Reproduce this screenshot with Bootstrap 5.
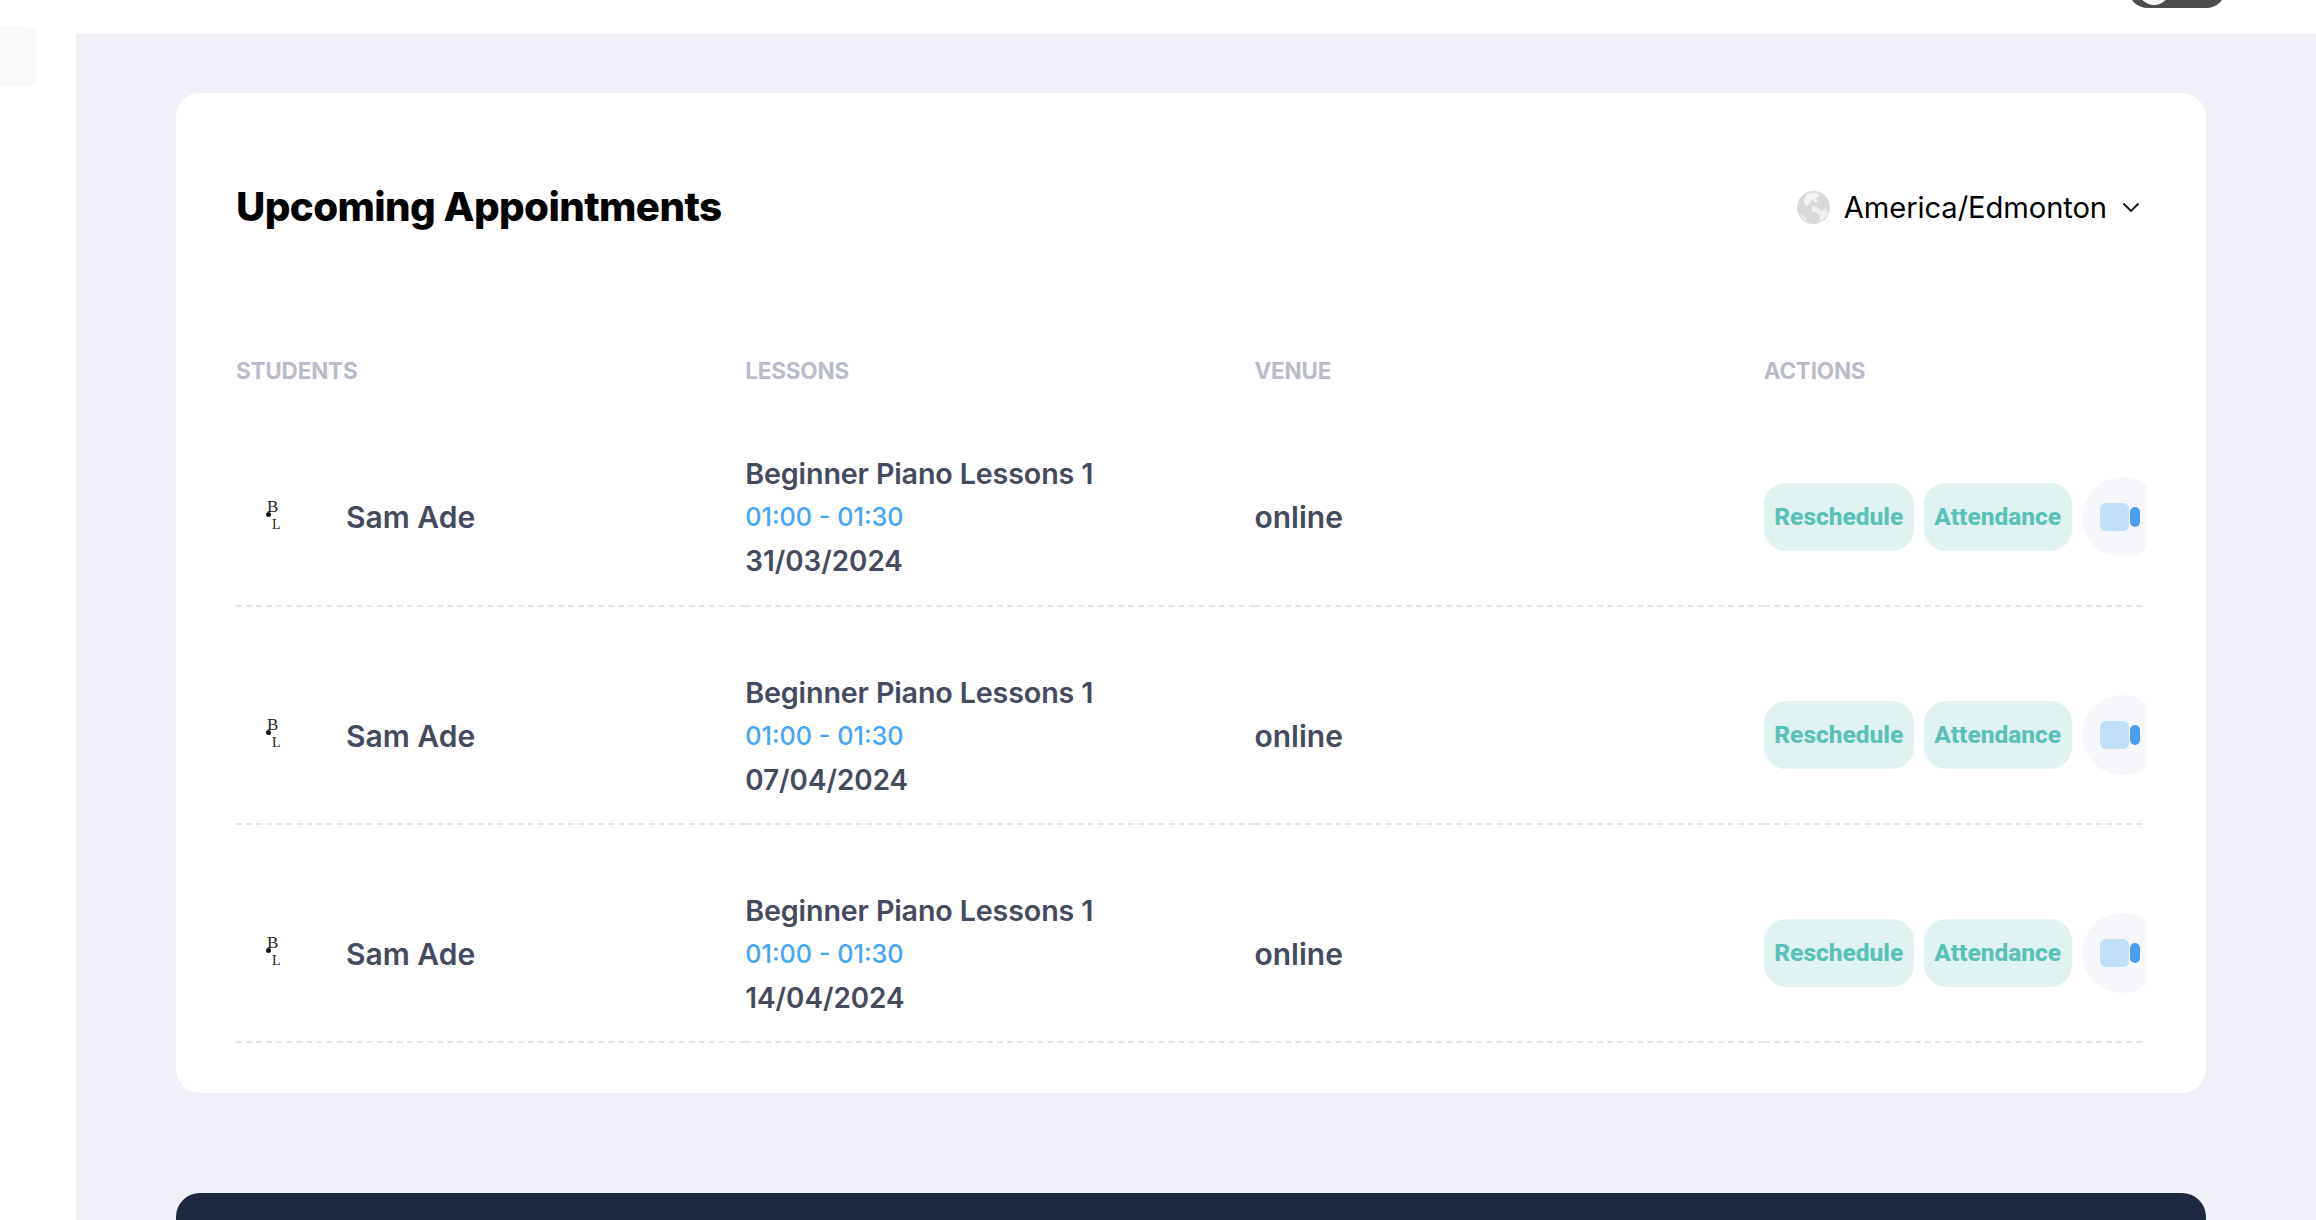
<!DOCTYPE html>
<html lang="en"><head><meta charset="utf-8"><title>Upcoming Appointments</title>
<link href="https://cdn.jsdelivr.net/npm/bootstrap@5.3.0/dist/css/bootstrap.min.css" rel="stylesheet">
<style>
html,body{height:100%;overflow:hidden;background:#fff}
body{font-family:"Inter","Liberation Sans",sans-serif}
.shell{height:1220px}
.side-rail{width:76px;flex:none;padding-top:27px}
.side-tab{width:36px;height:59px;background:#f7f8fa;border-radius:0 8px 8px 0}
.content-col{width:2240px;min-width:0;flex:none}
.top-strip{height:34px;flex:none;overflow:hidden;padding-right:90px}
.mode-toggle{width:98px;height:40px;margin-bottom:26px;background:#4d4d4d;border-radius:20px;padding:0 0 0 10px;overflow:hidden}
.mode-knob{width:32px;height:32px;border-radius:50%;background:#f4f4f4;margin-top:5px}
.main-area{background:#eff0f8;padding:59px 110px 0 100px;overflow:hidden;min-width:0}
.appt-panel{height:1000px;border:0;border-radius:24px;padding:0 60px;background:#fff}
.panel-head{height:263px}
.panel-title{font-size:40.3px;font-weight:800;color:#000;letter-spacing:-.6px;margin:0;line-height:1;padding-top:94px}
.zone{padding-top:98px;margin-right:6px;font-size:29.2px;color:#000;line-height:33px;letter-spacing:-.1px}
.zone-text{margin:0 15px 0 14px}
.table-clip{overflow:hidden;min-width:0}
.appt-table{width:2037px;table-layout:fixed;margin:0;--bs-table-bg:transparent}
.appt-table th{font-size:22.5px;font-weight:700;color:#b9bbca;padding:0 0 2px;border:0;line-height:30px;letter-spacing:-.2px}
.appt-table td{height:218px;padding:42px 0 0;border:0;border-bottom:2px dashed #e4e6ef;vertical-align:middle;color:#454b5e;background:transparent}
.person{font-size:30px;font-weight:600}
.logo-box{width:110px;padding-left:31px;flex:none}
.logo-mark{position:relative;width:22px;margin-top:-6px;font-family:"Liberation Serif",serif;color:#222}
.logo-mark span{display:block;font-size:17px;line-height:20px}
.logo-mark span+span{font-size:14px;line-height:16px;padding-left:5px}
.logo-mark::after{content:"";position:absolute;left:-1px;top:15px;width:5px;height:5px;border-radius:50%;background:#111}
.lesson-name{font-size:28.7px;font-weight:600;line-height:44px;letter-spacing:-.15px}
.lesson-time{font-size:25.2px;font-weight:500;line-height:43px;color:#45a5f8}
.lesson-date{font-size:27.8px;font-weight:600;line-height:44px}
.venue-text{font-size:30px;font-weight:600}
.action-row{margin-top:-2px}
.act{height:68px;border:0;border-radius:22px;background:#e0f3f1;color:#59c2b8;font-family:Roboto,"Liberation Sans",sans-serif;font-weight:800;font-size:24.5px;padding:0;line-height:68px;white-space:nowrap;--bs-btn-hover-bg:#e0f3f1;--bs-btn-hover-color:#59c2b8}
.act-wide{width:150px;flex:none}
.act-mid{width:148px;flex:none;margin:0 10px}
.video-btn{width:80px;height:80px;flex:none;border:0;border-radius:50%;background:#f6f7fa;padding:0}
.video-btn svg{display:block}
.dark-panel{height:120px;margin-top:100px;background:#1e293f;border-radius:24px}
</style></head><body>
<div class="shell d-flex">
  <aside class="side-rail"><div class="side-tab"></div></aside>
  <div class="content-col d-flex flex-column">
    <div class="top-strip d-flex justify-content-end align-items-end"><div class="mode-toggle"><div class="mode-knob"></div></div></div>
    <main class="main-area flex-grow-1">
      <section class="card appt-panel">
        <div class="panel-head d-flex justify-content-between align-items-start">
          <h2 class="panel-title">Upcoming Appointments</h2>
          <div class="zone d-flex align-items-center">
            <svg width="33" height="33" viewBox="0 0 33 33"><circle cx="16.5" cy="16.5" r="16.5" fill="#d9d9d9"/><path d="M10 3c3-1.500 7-2 10-1l3 3-4 2 2 4-3 1-2-3-3 2-2 4-3-1-1-5z" fill="#f2f2f2"/><path d="M15 15l5 1 4 4 5-3 2 6-5 6-4 2 1-6-4-4-4 0z" fill="#efefef"/><path d="M3 22l4 3 3 5c-3-1-6-4-7-8z" fill="#eeeeee"/></svg>
            <span class="zone-text">America/Edmonton</span>
            <svg width="18" height="11" viewBox="0 0 18 11" fill="none" stroke="#111" stroke-width="1.8"><path d="M1.500 1.500L9 9l7.500-7.500"/></svg>
          </div>
        </div>
        <div class="table-clip">
          <table class="table appt-table">
            <thead><tr><th>STUDENTS</th><th>LESSONS</th><th>VENUE</th><th>ACTIONS</th></tr></thead>
            <tbody><tr>
              <td><div class="d-flex align-items-center"><div class="logo-box"><div class="logo-mark"><span>B</span><span>L</span></div></div><span class="person">Sam Ade</span></div></td>
              <td><div class="lesson-name">Beginner Piano Lessons 1</div><div class="lesson-time">01:00 - 01:30</div><div class="lesson-date">31/03/2024</div></td>
              <td class="venue-text">online</td>
              <td><div class="action-row d-flex align-items-center"><button class="btn act act-wide">Reschedule</button><button class="btn act act-mid">Attendance</button><button class="btn video-btn" aria-label="Video"><svg width="80" height="80" viewBox="0 0 80 80"><rect x="18" y="26" width="29" height="28" rx="6" fill="#c1e0f7"/><rect x="48" y="30" width="10" height="20" rx="5" fill="#4a9ef2"/></svg></button></div></td>
            </tr><tr>
              <td><div class="d-flex align-items-center"><div class="logo-box"><div class="logo-mark"><span>B</span><span>L</span></div></div><span class="person">Sam Ade</span></div></td>
              <td><div class="lesson-name">Beginner Piano Lessons 1</div><div class="lesson-time">01:00 - 01:30</div><div class="lesson-date">07/04/2024</div></td>
              <td class="venue-text">online</td>
              <td><div class="action-row d-flex align-items-center"><button class="btn act act-wide">Reschedule</button><button class="btn act act-mid">Attendance</button><button class="btn video-btn" aria-label="Video"><svg width="80" height="80" viewBox="0 0 80 80"><rect x="18" y="26" width="29" height="28" rx="6" fill="#c1e0f7"/><rect x="48" y="30" width="10" height="20" rx="5" fill="#4a9ef2"/></svg></button></div></td>
            </tr><tr>
              <td><div class="d-flex align-items-center"><div class="logo-box"><div class="logo-mark"><span>B</span><span>L</span></div></div><span class="person">Sam Ade</span></div></td>
              <td><div class="lesson-name">Beginner Piano Lessons 1</div><div class="lesson-time">01:00 - 01:30</div><div class="lesson-date">14/04/2024</div></td>
              <td class="venue-text">online</td>
              <td><div class="action-row d-flex align-items-center"><button class="btn act act-wide">Reschedule</button><button class="btn act act-mid">Attendance</button><button class="btn video-btn" aria-label="Video"><svg width="80" height="80" viewBox="0 0 80 80"><rect x="18" y="26" width="29" height="28" rx="6" fill="#c1e0f7"/><rect x="48" y="30" width="10" height="20" rx="5" fill="#4a9ef2"/></svg></button></div></td>
            </tr></tbody>
          </table>
        </div>
      </section>
      <div class="dark-panel"></div>
    </main>
  </div>
</div>
<script src="https://cdn.jsdelivr.net/npm/bootstrap@5.3.0/dist/js/bootstrap.bundle.min.js"></script>
</body></html>
